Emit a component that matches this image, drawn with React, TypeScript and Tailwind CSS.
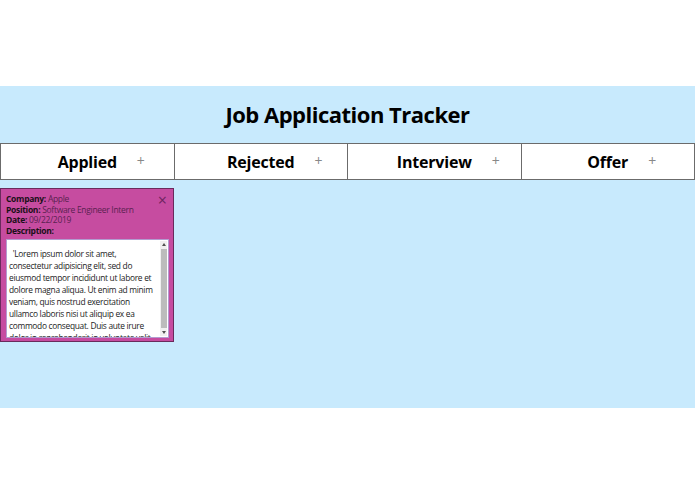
import React from 'react';

const columns = ['Applied', 'Rejected', 'Interview', 'Offer'];

const description =
    "  'Lorem ipsum dolor sit amet, consectetur adipisicing elit, sed do eiusmod tempor incididunt ut labore et dolore magna aliqua. Ut enim ad minim veniam, quis nostrud exercitation ullamco laboris nisi ut aliquip ex ea commodo consequat. Duis aute irure dolor in reprehenderit in voluptate velit esse cillum dolore eu fugiat nulla pariatur. Excepteur sint occaecat cupidatat non proident, sunt in culpa qui officia deserunt mollit anim id est laborum.'";

const JobCard: React.FC = () => (
    <div className="relative h-[154px] bg-[#c64ca0] border border-[#6a2a5c] px-[5px] pt-[5px]">
        <button className="absolute right-[6px] top-[3px] text-[#6e2460] text-[16px] leading-none">×</button>
        <div className="text-[8.5px] leading-[10.5px] tracking-[-0.3px] text-[#5a2250]">
            <p><span className="font-bold text-[#1a1018]">Company:</span> Apple</p>
            <p><span className="font-bold text-[#1a1018]">Position:</span> Software Engineer Intern</p>
            <p><span className="font-bold text-[#1a1018]">Date:</span> 09/22/2019</p>
            <p><span className="font-bold text-[#1a1018]">Description:</span></p>
        </div>
        {/* textarea with a drawn classic scrollbar laid over its right edge */}
        <div className="relative mt-[3px] w-[163px] h-[99px] border border-[#b39bd0] bg-white">
            <textarea
                readOnly
                value={description}
                className="block w-full h-full resize-none bg-white pl-[2px] pr-[8px] pt-[8px] text-[8.4px] leading-[12px] tracking-[-0.3px] text-[#222] outline-none overflow-hidden"
            />
            <div className="absolute right-[1px] top-[1px] bottom-[1px] w-[7px] bg-[#f0f0f0] flex flex-col items-center">
                <div className="h-[8px] flex items-center justify-center">
                    <div className="w-0 h-0 border-x-[2px] border-x-transparent border-b-[3px] border-b-[#505050]" />
                </div>
                <div className="w-[6px] h-[84px] bg-[#bcbcbc]" />
                <div className="flex-1" />
                <div className="h-[8px] flex items-center justify-center">
                    <div className="w-0 h-0 border-x-[2px] border-x-transparent border-t-[3px] border-t-[#505050]" />
                </div>
            </div>
        </div>
    </div>
);

const App: React.FC = () => {
    return (
        <div className="w-[695px] h-[494px] bg-white font-['Open_Sans','Noto_Sans',sans-serif]">
            <div className="h-[86px]" />
            <div className="h-[322px] bg-[#c8eafd]">
                <div className="h-[57px] flex items-center justify-center">
                    <h1 className="text-[22px] tracking-[-0.5px] font-bold text-black">Job Application Tracker</h1>
                </div>
                <div className="grid grid-cols-4 border-y border-l border-[#6b6b6b] bg-white h-[37px]">
                    {columns.map(col => (
                        <div key={col} className="border-r border-[#6b6b6b] flex items-center justify-center pt-[1px]">
                            <span className="relative text-[16px] tracking-[-0.2px] font-bold text-black">
                                {col}
                                <span className="absolute left-full ml-[20px] top-[0px] font-normal text-[#888] text-[14px]">+</span>
                            </span>
                        </div>
                    ))}
                </div>
                <div className="grid grid-cols-4 mt-[8px]">
                    <div className="w-[174px]">
                        <JobCard />
                    </div>
                </div>
            </div>
        </div>
    );
};

export default App;
